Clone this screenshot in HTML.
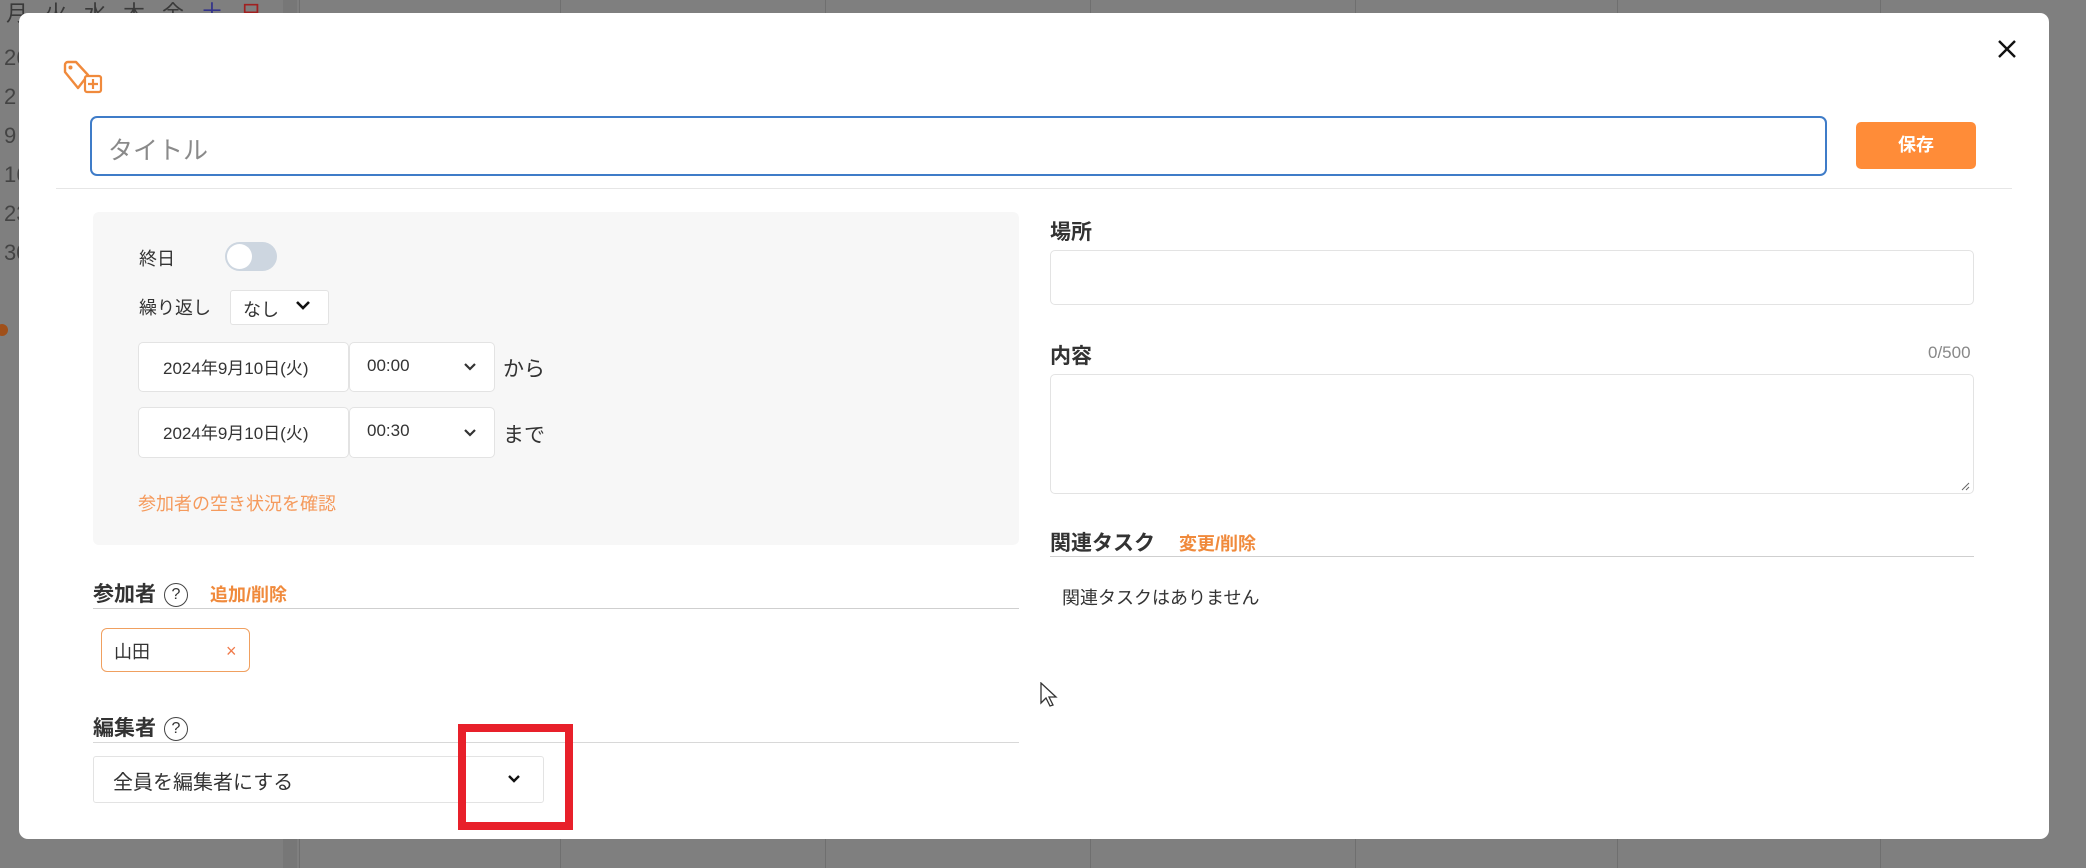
<!DOCTYPE html>
<html><head><meta charset="utf-8"><style>
*{box-sizing:border-box;margin:0;padding:0}
body{width:2086px;height:868px;overflow:hidden;background:#7f7f7f;font-family:"Liberation Sans","Noto Sans CJK JP",sans-serif;color:#333;position:relative}
.a{position:absolute}
.bgt{color:#3a3a3a;font-size:22px}
.vl{position:absolute;top:0;height:868px;width:1px;background:#6f6f6f}
.modal{left:19px;top:13px;width:2030px;height:826px;background:#fff;border-radius:9px}
.box{position:absolute;background:#fff;border:1px solid #e3e3e3;border-radius:5px}
.t{position:absolute;font-size:18px;color:#333;white-space:nowrap}
.h{position:absolute;font-size:21px;font-weight:bold;color:#333;white-space:nowrap}
.or{color:#f08a3c}
.line{position:absolute;height:1px;background:#cfcfcf}
.q{display:inline-block;width:24px;height:24px;border:1.5px solid #444;border-radius:50%;font-size:16px;text-align:center;line-height:21px;font-weight:normal;vertical-align:2px;margin-left:8px}
</style></head><body>
<div class="a" style="left:283px;top:0;width:14px;height:868px;background:#777"></div>
<div class="vl" style="left:299px"></div><div class="vl" style="left:560px"></div><div class="vl" style="left:825px"></div><div class="vl" style="left:1090px"></div><div class="vl" style="left:1355px"></div><div class="vl" style="left:1617px"></div><div class="vl" style="left:1880px"></div>
<div class="a bgt" style="left:6px;top:-4px;letter-spacing:17px">月火水木金<span style="color:#33338a">土</span><span style="color:#a02020">日</span></div>
<div class="a bgt" style="left:4px;top:38px;line-height:39px;color:#444">26<br>2<br>9<br>16<br>23<br>30</div>
<div class="a" style="left:-4px;top:324px;width:12px;height:12px;border-radius:50%;background:#a0501a"></div>

<div class="a modal"></div>
<svg class="a" style="left:1997px;top:39px" width="20" height="20" viewBox="0 0 20 20"><path d="M2 2L18 18M18 2L2 18" stroke="#111" stroke-width="2.4"/></svg>
<svg class="a" style="left:62px;top:59px" width="44" height="36" viewBox="0 0 44 36"><path d="M3 6a3 3 0 0 1 3-3h8l12 13-10 13L3 13z" fill="none" stroke="#f08a3c" stroke-width="2.4" stroke-linejoin="round"/><circle cx="8.5" cy="8.5" r="2" fill="#f08a3c"/><rect x="23" y="17" width="16" height="16" rx="2" fill="#fff" stroke="#f08a3c" stroke-width="2.2"/><path d="M31 20v10M26 25h10" stroke="#f08a3c" stroke-width="2.2"/></svg>
<div class="a" style="left:90px;top:116px;width:1737px;height:60px;border:2px solid #3f7cc8;border-radius:7px"></div>
<div class="t" style="left:108px;top:131px;font-size:25px;color:#8a8a8a">タイトル</div>
<div class="a" style="left:1856px;top:122px;width:120px;height:47px;background:#ff8c38;border-radius:5px;color:#fff;font-weight:bold;font-size:18px;text-align:center;line-height:47px">保存</div>
<div class="line" style="left:56px;top:188px;width:1956px;background:#e6e6e6"></div>

<div class="a" style="left:93px;top:212px;width:926px;height:333px;background:#f7f7f7;border-radius:6px"></div>
<div class="t" style="left:139px;top:245px">終日</div>
<div class="a" style="left:225px;top:242px;width:52px;height:29px;border-radius:15px;background:#cdd6e0"></div>
<div class="a" style="left:227px;top:244px;width:25px;height:25px;border-radius:50%;background:#fff"></div>
<div class="t" style="left:139px;top:294px">繰り返し</div>
<div class="box" style="left:230px;top:290px;width:99px;height:35px;border-radius:3px"></div>
<div class="t" style="left:243px;top:296px">なし</div>
<svg class="a" style="left:295px;top:300px" width="16" height="12" viewBox="0 0 16 12"><path d="M2 2l6 6 6-6" fill="none" stroke="#111" stroke-width="2.6"/></svg>

<div class="box" style="left:138px;top:342px;width:211px;height:50px"></div>
<div class="t" style="left:163px;top:354px;font-size:17px">2024年9月10日(火)</div>
<div class="box" style="left:349px;top:342px;width:146px;height:50px"></div>
<div class="t" style="left:367px;top:356px;font-size:17px">00:00</div>
<svg class="a" style="left:463px;top:362px" width="14" height="10" viewBox="0 0 14 10"><path d="M2 2l5 5 5-5" fill="none" stroke="#333" stroke-width="2.2"/></svg>
<div class="t" style="left:503px;top:353px;font-size:21px">から</div>

<div class="box" style="left:138px;top:407px;width:211px;height:51px"></div>
<div class="t" style="left:163px;top:419px;font-size:17px">2024年9月10日(火)</div>
<div class="box" style="left:349px;top:407px;width:146px;height:51px"></div>
<div class="t" style="left:367px;top:421px;font-size:17px">00:30</div>
<svg class="a" style="left:463px;top:428px" width="14" height="10" viewBox="0 0 14 10"><path d="M2 2l5 5 5-5" fill="none" stroke="#333" stroke-width="2.2"/></svg>
<div class="t" style="left:503px;top:419px;font-size:21px">まで</div>
<div class="t" style="left:138px;top:490px;color:#f59a5c">参加者の空き状況を確認</div>

<div class="h" style="left:93px;top:578px">参加者<span class="q">?</span><span class="or" style="font-size:18px;margin-left:22px">追加/削除</span></div>
<div class="line" style="left:93px;top:608px;width:926px"></div>
<div class="a" style="left:101px;top:628px;width:149px;height:44px;border:1.5px solid #f0a060;border-radius:6px"></div>
<div class="t" style="left:114px;top:638px">山田</div>
<div class="t" style="left:226px;top:641px;color:#f07a4a">×</div>

<div class="h" style="left:93px;top:712px">編集者<span class="q">?</span></div>
<div class="line" style="left:93px;top:742px;width:926px;background:#d8d8d8"></div>
<div class="box" style="left:93px;top:756px;width:451px;height:47px;border-radius:3px"></div>
<div class="t" style="left:113px;top:766px;font-size:20px">全員を編集者にする</div>
<svg class="a" style="left:507px;top:774px" width="14" height="10" viewBox="0 0 14 10"><path d="M2 2l5 5 5-5" fill="none" stroke="#111" stroke-width="2.4"/></svg>
<div class="a" style="left:458px;top:724px;width:115px;height:106px;border:8px solid #e8202a"></div>

<div class="h" style="left:1050px;top:216px">場所</div>
<div class="box" style="left:1050px;top:250px;width:924px;height:55px"></div>
<div class="h" style="left:1050px;top:340px">内容</div>
<div class="t" style="left:1928px;top:343px;font-size:17px;color:#888">0/500</div>
<div class="box" style="left:1050px;top:374px;width:924px;height:120px"></div>
<svg class="a" style="left:1960px;top:481px" width="10" height="10" viewBox="0 0 10 10"><path d="M9 2L2 9M9 6L6 9" stroke="#666" stroke-width="1"/></svg>
<div class="h" style="left:1050px;top:527px">関連タスク<span class="or" style="font-size:18px;margin-left:24px">変更/削除</span></div>
<div class="line" style="left:1050px;top:556px;width:924px"></div>
<div class="t" style="left:1062px;top:584px">関連タスクはありません</div>
<svg class="a" style="left:1040px;top:682px" width="18" height="26" viewBox="0 0 18 26"><path d="M1 1v20l5-5 4 8 3-1-4-8h7z" fill="#fff" stroke="#333" stroke-width="1.3"/></svg>
</body></html>
